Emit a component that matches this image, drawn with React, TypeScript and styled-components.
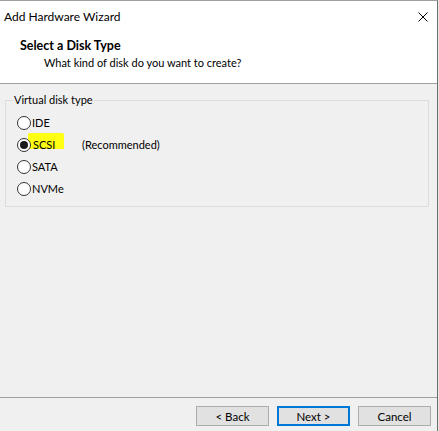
import React, { FC, useState } from "react";
import styled, { createGlobalStyle } from "styled-components";

const GlobalStyle = createGlobalStyle`
    html, body {
        margin: 0;
        padding: 0;
        background: #e8e8e8;
    }
    body {
        font-family: Lato, "Noto Sans", sans-serif;
        font-size: 11px;
        color: #000;
    }
`;

const options = [
    { id: "ide", label: "IDE" },
    { id: "scsi", label: "SCSI", note: "(Recommended)", highlight: true },
    { id: "sata", label: "SATA" },
    { id: "nvme", label: "NVMe" },
];

const App: FC = () => {
    const [selected, setSelected] = useState("scsi");

    return (
        <>
            <GlobalStyle />
            <Window>
                <TitleBar>
                    <Title>Add Hardware Wizard</Title>
                    <CloseButton aria-label="Close">
                        <svg width="10" height="10" viewBox="0 0 10 10">
                            <path d="M0.5 0.5 L9.5 9.5 M9.5 0.5 L0.5 9.5" stroke="#000" strokeWidth="1" />
                        </svg>
                    </CloseButton>
                </TitleBar>
                <Header>
                    <HeaderTitle>Select a Disk Type</HeaderTitle>
                    <HeaderSub>What kind of disk do you want to create?</HeaderSub>
                </Header>
                <Body>
                    <GroupBox>
                        <Legend>Virtual disk type</Legend>
                        {options.map((opt) => (
                            <OptionRow key={opt.id} onClick={() => setSelected(opt.id)}>
                                <Radio $checked={selected === opt.id} />
                                <OptionLabel $highlight={!!opt.highlight}>{opt.label}</OptionLabel>
                                {opt.note && <Note>{opt.note}</Note>}
                            </OptionRow>
                        ))}
                    </GroupBox>
                </Body>
                <Footer>
                    <Button>&lt; Back</Button>
                    <Button $primary>Next &gt;</Button>
                    <Button>Cancel</Button>
                </Footer>
            </Window>
        </>
    );
};

export default App;

const Window = styled.div`
    width: 437px;
    height: 430px;
    display: flex;
    flex-direction: column;
    background: #f0f0f0;
    border-top: 1px solid #a0a0a0;
    border-right: 1px solid #6e6e6e;
    border-bottom: 1px solid #6e6e6e;
`;

const TitleBar = styled.div`
    height: 30px;
    display: flex;
    align-items: center;
    justify-content: space-between;
    padding: 0 9px 0 4px;
    background: #fff;
`;

const Title = styled.div`
    font-size: 12px;
    margin-top: 1px;
`;

const CloseButton = styled.div`
    width: 10px;
    height: 10px;
    display: flex;
    margin-top: 1px;
`;

const Header = styled.div`
    height: 53px;
    box-sizing: border-box;
    padding: 7px 0 0 20px;
    background: #fff;
    border-bottom: 1px solid #a0a0a0;
    line-height: 16px;
`;

const HeaderTitle = styled.div`
    font-weight: bold;
    font-size: 12.5px;
`;

const HeaderSub = styled.div`
    margin-left: 24px;
    margin-top: 1px;
`;

const Body = styled.div`
    flex: 1;
    padding: 8px 8px 0 5px;
`;

const GroupBox = styled.fieldset`
    margin: 0;
    width: 424px;
    box-sizing: border-box;
    border: 1px solid #dcdcdc;
    padding: 4px 0 6px 7px;
`;

const Legend = styled.legend`
    padding: 0 1px;
    line-height: 16px;
`;

const OptionRow = styled.div`
    height: 22px;
    display: flex;
    align-items: center;
    padding-left: 4px;
    cursor: default;
`;

const Radio = styled.span<{ $checked: boolean }>`
    position: relative;
    z-index: 1;
    width: 14px;
    height: 14px;
    box-sizing: border-box;
    border: 1px solid #333;
    border-radius: 50%;
    background: #fff;
    display: flex;
    align-items: center;
    justify-content: center;
    flex-shrink: 0;

    &::after {
        content: "";
        width: 8px;
        height: 8px;
        border-radius: 50%;
        background: ${(p) => (p.$checked ? "#1a1a1a" : "transparent")};
    }
`;

const OptionLabel = styled.span<{ $highlight: boolean }>`
    line-height: 16px;
    min-width: 50px;
    margin-left: 1px;
    ${(p) =>
        p.$highlight &&
        `
        box-sizing: border-box;
        min-width: 0;
        width: 36px;
        margin: -4px 18px 0 -3px;
        padding: 4px 0 0 5px;
        background: linear-gradient(#ffff14, #ffff14) 0 0 / 100% 16px no-repeat;
        border-radius: 2px;
    `}
`;

const Note = styled.span`
    line-height: 16px;
`;

const Footer = styled.div`
    height: 34px;
    border-top: 1px solid #a0a0a0;
    display: flex;
    justify-content: flex-end;
    align-items: flex-start;
    gap: 8px;
    padding: 8px 6px 0 0;
    box-sizing: border-box;
`;

const Button = styled.button<{ $primary?: boolean }>`
    width: 73px;
    height: 20px;
    box-sizing: border-box;
    font-family: inherit;
    font-size: 11.5px;
    padding: 0;
    background: #e1e1e1;
    border: ${(p) => (p.$primary ? "2px solid #0078d7" : "1px solid #adadad")};
    color: #000;
`;
